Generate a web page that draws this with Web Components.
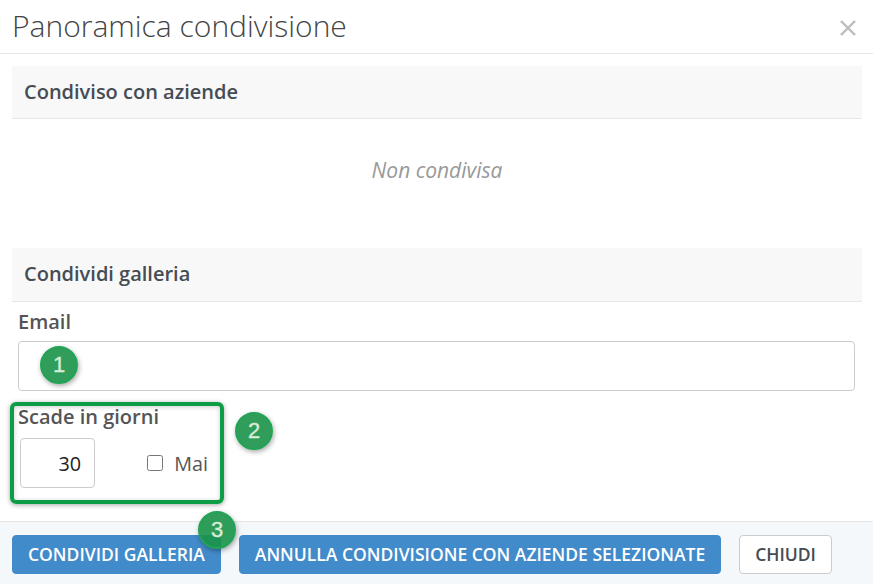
<!DOCTYPE html>
<html lang="it">
<head>
<meta charset="utf-8">
<title>Panoramica condivisione</title>
<style>
  html, body { margin: 0; padding: 0; background: #fff; }
  body { font-family: "Open Sans", sans-serif; width: 873px; height: 584px; overflow: hidden; position: relative; }
</style>
</head>
<body>
<share-dialog>
  <span slot="title">Panoramica condivisione</span>
  <section-head>Condiviso con aziende</section-head>
  <empty-note>Non condivisa</empty-note>
  <section-head style="height:53px">Condividi galleria</section-head>
  <share-form></share-form>
  <ui-button slot="footer" kind="primary">Condividi galleria</ui-button>
  <ui-button slot="footer" kind="primary">Annulla condivisione con aziende selezionate</ui-button>
  <ui-button slot="footer">Chiudi</ui-button>
</share-dialog>
<step-frame></step-frame>
<step-badge style="left:40px;top:346px">1</step-badge>
<step-badge style="left:235px;top:412px">2</step-badge>
<step-badge style="left:198px;top:511px">3</step-badge>

<script>
// dialogo principale: header, corpo e footer
class ShareDialog extends HTMLElement {
  constructor() {
    super();
    this.attachShadow({ mode: 'open' }).innerHTML = `
      <style>
        :host { display: flex; flex-direction: column; height: 584px; color: #555; }
        header { height: 53px; box-sizing: content-box; border-bottom: 1px solid #e5e5e5; display: flex; align-items: center; justify-content: space-between; padding: 0 16px 0 12px; }
        h1 { margin: 0 0 2px; font-weight: 300; font-size: 30px; line-height: 51px; color: #444; }
        svg { display: block; margin-top: 2px; }
        main { flex: 1; padding: 12px 11px 0 12px; }
        footer { height: 63px; box-sizing: border-box; border-top: 1px solid #e5e5e5; background: #f5f8fb; display: flex; gap: 18px; padding: 13px 12px 0; }
      </style>
      <header>
        <h1><slot name="title"></slot></h1>
        <svg width="18" height="18" viewBox="0 0 18 18"><path d="M2 2 L16 16 M16 2 L2 16" stroke="#bcbcbc" stroke-width="2.4" fill="none"/></svg>
      </header>
      <main><slot></slot></main>
      <footer><slot name="footer"></slot></footer>`;
  }
}
customElements.define('share-dialog', ShareDialog);

class SectionHead extends HTMLElement {
  constructor() {
    super();
    this.attachShadow({ mode: 'open' }).innerHTML = `
      <style>
        :host { display: block; height: 52px; line-height: 52px; background: #f8f8f8; border-bottom: 1px solid #e7e7e7; padding-left: 12px; font-size: 20px; font-weight: 600; color: #454c54; }
      </style>
      <slot></slot>`;
  }
}
customElements.define('section-head', SectionHead);

class EmptyNote extends HTMLElement {
  constructor() {
    super();
    this.attachShadow({ mode: 'open' }).innerHTML = `
      <style>
        :host { display: block; height: 129px; padding-top: 37px; box-sizing: border-box; text-align: center; font-style: italic; font-size: 21px; line-height: 28px; color: #999; }
      </style>
      <slot></slot>`;
  }
}
customElements.define('empty-note', EmptyNote);

// campi del form: email, giorni di scadenza, checkbox
class ShareForm extends HTMLElement {
  constructor() {
    super();
    this.attachShadow({ mode: 'open' }).innerHTML = `
      <style>
        :host { display: block; padding: 7px 7px 0 6px; color: #555; }
        label.t { display: block; font-size: 20px; font-weight: 600; line-height: 26px; }
        input { font-family: inherit; font-size: 19.8px; box-sizing: border-box; border: 1px solid #ccc; border-radius: 4px; background: #fff; outline: none; color: #222; display: block; margin: 0; }
        .email { width: 100%; height: 50px; margin-top: 6px; }
        .days { margin-top: 13px; }
        .row { display: flex; align-items: center; width: 188px; margin-top: 8px; margin-left: 2px; }
        .num { width: 75px; height: 50px; text-align: right; padding: 0 13px; }
        .mai { margin-left: auto; display: flex; align-items: center; font-size: 19.8px; }
        .box { width: 16px; height: 16px; box-sizing: border-box; border: 1px solid #767676; border-radius: 2.5px; background: #fff; margin-right: 11px; }
      </style>
      <label class="t">Email</label>
      <input class="email" type="text">
      <div class="days">
        <label class="t">Scade in giorni</label>
        <div class="row">
          <input class="num" type="text" value="30">
          <div class="mai"><span class="box"></span><span>Mai</span></div>
        </div>
      </div>`;
  }
}
customElements.define('share-form', ShareForm);

class UiButton extends HTMLElement {
  constructor() {
    super();
    this.attachShadow({ mode: 'open' }).innerHTML = `
      <style>
        :host { display: block; height: 39px; box-sizing: border-box; padding: 0 15px; border: 1px solid #ccc; border-radius: 4px; background: #fff; color: #454c54; font-size: 17.5px; font-weight: 600; line-height: 37px; text-transform: uppercase; white-space: nowrap; }
        :host([kind="primary"]) { background: #428bca; border-color: #428bca; color: #fff; }
      </style>
      <slot></slot>`;
  }
}
customElements.define('ui-button', UiButton);

// annotazioni verdi sopra lo screenshot
class StepFrame extends HTMLElement {
  constructor() {
    super();
    this.attachShadow({ mode: 'open' }).innerHTML = `
      <style>
        :host { position: absolute; left: 10px; top: 402px; width: 214px; height: 102px; box-sizing: border-box; border: 4px solid #0c9d46; border-radius: 6px; box-shadow: 0 1px 5px rgba(0,0,0,.35), inset 0 1px 5px rgba(0,0,0,.2); }
      </style>`;
  }
}
customElements.define('step-frame', StepFrame);

class StepBadge extends HTMLElement {
  constructor() {
    super();
    this.attachShadow({ mode: 'open' }).innerHTML = `
      <style>
        :host { position: absolute; width: 38px; height: 38px; box-sizing: border-box; border-radius: 50%; background: rgba(26,146,72,.9); border: 2px solid #22a355; box-shadow: 1px 2px 5px rgba(0,0,0,.35); color: #d7ecd9; font-family: "Liberation Sans", sans-serif; font-size: 22px; font-weight: 400; -webkit-text-stroke: .4px #d7ecd9; display: flex; align-items: center; justify-content: center; }
      </style>
      <slot></slot>`;
  }
}
customElements.define('step-badge', StepBadge);
</script>
</body>
</html>
